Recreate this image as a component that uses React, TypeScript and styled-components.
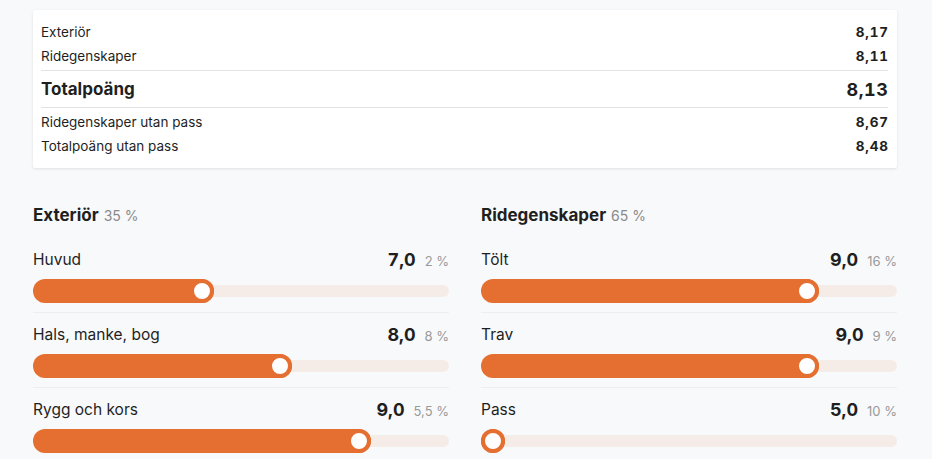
import React from 'react';
import styled, { createGlobalStyle } from 'styled-components';

const GlobalStyle = createGlobalStyle`
  body {
    margin: 0;
    background: #f8f9fb;
    font-family: Inter, "Noto Sans", sans-serif;
    color: #1f1f1f;
  }
`;

const ORANGE = '#e56f30';
const MIN = 5;
const MAX = 10;
const TRACK_WIDTH = 416;
const THUMB = 24;

const Page = styled.div`
  padding: 10px 35px 0 33px;
  width: 864px;
`;

const Card = styled.div`
  background: #fff;
  border-radius: 2px;
  box-shadow: 0 1px 3px rgba(0, 0, 0, 0.1);
  padding: 10px 9px 10px 8px;
`;

const SumRow = styled.div`
  display: flex;
  justify-content: space-between;
  align-items: center;
  height: 24px;
  font-size: 13.5px;
`;

const SumValue = styled.span`
  font-weight: 700;
  font-variant-numeric: tabular-nums;
  letter-spacing: 0.8px;
  margin-right: -0.8px;
`;

const TotalRow = styled.div`
  display: flex;
  justify-content: space-between;
  align-items: center;
  height: 36px;
  margin: 2px 0 2px;
  border-top: 1px solid #e3e3e3;
  border-bottom: 1px solid #e3e3e3;
  font-size: 17px;
  font-weight: 700;
`;

const TotalValue = styled.span`
  font-size: 18px;
  font-variant-numeric: tabular-nums;
  letter-spacing: 0.6px;
  margin-right: -0.6px;
`;

const Columns = styled.div`
  display: grid;
  grid-template-columns: ${TRACK_WIDTH}px ${TRACK_WIDTH}px;
  column-gap: 32px;
  margin-top: 37px;
`;

const Column = styled.div`
  display: flex;
  flex-direction: column;
`;

const SectionTitle = styled.div`
  height: 20px;
  line-height: 20px;
  font-size: 17px;
  font-weight: 700;
  margin-bottom: 13px;
`;

const SectionWeight = styled.span`
  font-size: 14px;
  font-weight: 400;
  color: #8a8a8a;
  margin-left: 5px;
`;

const Item = styled.div`
  padding: 10px 0 9px;
  border-bottom: 1px solid #eceef1;
`;

const ItemHead = styled.div`
  display: flex;
  justify-content: space-between;
  align-items: center;
  height: 22px;
  margin-bottom: 9px;
`;

const ItemLabel = styled.span`
  font-size: 15.5px;
`;

const ItemScore = styled.div`
  display: flex;
  align-items: baseline;
  gap: 9px;
`;

const ScoreValue = styled.span`
  font-size: 18px;
  font-weight: 700;
  font-variant-numeric: tabular-nums;
`;

const ScoreWeight = styled.span`
  font-size: 13px;
  color: #999;
`;

const Slider = styled.div`
  position: relative;
  height: ${THUMB}px;
  display: flex;
  align-items: center;
`;

const Track = styled.div`
  width: 100%;
  height: 12px;
  border-radius: 6px;
  background: #f5ece7;
`;

const Fill = styled.div`
  position: absolute;
  left: 0;
  top: 0;
  height: ${THUMB}px;
  border-radius: ${THUMB / 2}px;
  background: ${ORANGE};
`;

const Thumb = styled.div`
  position: absolute;
  right: 0;
  top: 0;
  width: ${THUMB}px;
  height: ${THUMB}px;
  box-sizing: border-box;
  border-radius: 50%;
  border: 4px solid ${ORANGE};
  background: #fff;
`;

type Score = { label: string; value: number; weight: string };

const exterior: Score[] = [
  { label: 'Huvud', value: 7, weight: '2 %' },
  { label: 'Hals, manke, bog', value: 8, weight: '8 %' },
  { label: 'Rygg och kors', value: 9, weight: '5,5 %' },
];

const riding: Score[] = [
  { label: 'Tölt', value: 9, weight: '16 %' },
  { label: 'Trav', value: 9, weight: '9 %' },
  { label: 'Pass', value: 5, weight: '10 %' },
];

const fmt = (v: number) => v.toFixed(1).replace('.', ',');

const ScoreItem = ({ label, value, weight }: Score) => {
  const pos = ((value - MIN) / (MAX - MIN)) * (TRACK_WIDTH - THUMB);
  return (
    <Item>
      <ItemHead>
        <ItemLabel>{label}</ItemLabel>
        <ItemScore>
          <ScoreValue>{fmt(value)}</ScoreValue>
          <ScoreWeight>{weight}</ScoreWeight>
        </ItemScore>
      </ItemHead>
      <Slider>
        <Track />
        <Fill style={{ width: pos + THUMB }}>
          <Thumb />
        </Fill>
      </Slider>
    </Item>
  );
};

const App = () => (
  <Page>
    <GlobalStyle />
    <Card>
      <SumRow>
        <span>Exteriör</span>
        <SumValue>8,17</SumValue>
      </SumRow>
      <SumRow>
        <span>Ridegenskaper</span>
        <SumValue>8,11</SumValue>
      </SumRow>
      <TotalRow>
        <span>Totalpoäng</span>
        <TotalValue>8,13</TotalValue>
      </TotalRow>
      <SumRow>
        <span>Ridegenskaper utan pass</span>
        <SumValue>8,67</SumValue>
      </SumRow>
      <SumRow>
        <span>Totalpoäng utan pass</span>
        <SumValue>8,48</SumValue>
      </SumRow>
    </Card>
    <Columns>
      <Column>
        <SectionTitle>
          Exteriör<SectionWeight>35 %</SectionWeight>
        </SectionTitle>
        {exterior.map((s) => (
          <ScoreItem key={s.label} {...s} />
        ))}
      </Column>
      <Column>
        <SectionTitle>
          Ridegenskaper<SectionWeight>65 %</SectionWeight>
        </SectionTitle>
        {riding.map((s) => (
          <ScoreItem key={s.label} {...s} />
        ))}
      </Column>
    </Columns>
  </Page>
);

export default App;
